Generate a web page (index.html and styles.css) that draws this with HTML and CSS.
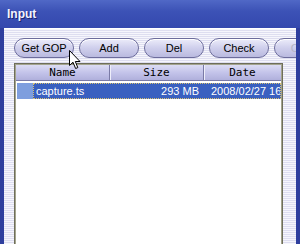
FILE: index.html
```html
<!DOCTYPE html>
<html lang="en">
<head>
  <meta charset="UTF-8" />
  <title>Input</title>
  <link rel="stylesheet" href="styles.css">
</head>
<body>
  <div class="window">
    <div class="titlebar">Input</div>

    <div class="content">
      <div class="toolbar">
        <button class="pill">Get GOP</button>
        <button class="pill">Add</button>
        <button class="pill">Del</button>
        <button class="pill">Check</button>
        <button class="pill disabled">Clear</button>
      </div>

      <div class="list">
        <div class="list-head">
          <div class="col col-name">Name</div>
          <div class="col col-size">Size</div>
          <div class="col col-date">Date</div>
        </div>
        <div class="row selected">
          <div class="row-mark"></div>
          <div class="row-cells">
            <span class="cell cell-name">capture.ts</span>
            <span class="cell cell-size">293 MB</span>
            <span class="cell cell-date">2008/02/27 16:32</span>
          </div>
        </div>
      </div>
    </div>

    <!-- mouse pointer over the first button -->
    <svg class="cursor" width="13" height="20" viewBox="0 0 13 20">
      <path d="M0.5 0.5 L0.5 15.5 L4 12.2 L6.6 18.5 L8.8 17.6 L6.3 11.5 L11 11.5 Z"
            fill="#fff" stroke="#000" stroke-width="1" stroke-linejoin="miter" />
    </svg>
  </div>
</body>
</html>
```

FILE: styles.css
```css
body {
  margin: 0;
  background: #3446aa;
}

.window {
  position: relative;
  width: 300px;
  height: 244px;
  overflow: hidden;
  background: #2f3f9e;
  font-family: "Liberation Sans", Arial, sans-serif;
}

.titlebar {
  height: 28px;
  box-sizing: border-box;
  padding: 7px 0 0 7px;
  background: linear-gradient(#5068c6, #3c52b6 40%, #3448ae);
  color: #f4f4ff;
  font-weight: bold;
  font-size: 12px;
  text-shadow: 1px 1px 0 #1c2470;
}

.content {
  margin: 0 4px;
  height: 216px;
  overflow: hidden;
  border-top: 1px solid #ffffff;
  box-sizing: border-box;
  background: repeating-linear-gradient(to bottom, #f6f6fc 0 1px, #dedef0 1px 2px);
  padding: 9px 0 0 10px;
}

.toolbar {
  display: flex;
  gap: 5px;
  white-space: nowrap;
}

.pill {
  flex: 0 0 60px;
  height: 20px;
  margin: 0;
  padding: 0;
  border: 1px solid #6c6c9c;
  border-radius: 10px;
  background: linear-gradient(#ececfa, #cfcfec 50%, #babadf);
  box-shadow: inset 0 1px 0 #ffffff;
  font-family: "Liberation Sans", Arial, sans-serif;
  font-size: 11px;
  color: #000;
}

.pill.disabled {
  color: #b4b4c4;
}

.list {
  margin-top: 5px;
  width: 269px;
  height: 200px;
  border: 1px solid #6e6e5a;
  box-shadow: inset 0 0 0 1px #a4a48e;
  box-sizing: border-box;
  background: #fff;
  padding: 1px;
  font-size: 11px;
}

.list-head {
  display: flex;
  height: 16px;
  background: linear-gradient(#dcdcf4, #c4c4ea 50%, #b0b0dc);
  border-bottom: 1px solid #7a7aa6;
  box-sizing: border-box;
  font-family: "DejaVu Sans Mono", monospace;
  font-size: 11px;
  line-height: 15px;
  color: #000;
}

.col {
  text-align: center;
  border-right: 1px solid #7a7aa6;
  box-shadow: 1px 0 0 #eeeefa;
}

.col-name {
  width: 93px;
}

.col-size {
  width: 93px;
}

.col-date {
  flex: 1;
  border-right: none;
  box-shadow: none;
}

.row {
  display: flex;
  height: 16px;
  margin: 2px 0 0 1px;
}

.row-mark {
  flex: 0 0 16px;
  background: #7e9ede;
}

.row-cells {
  flex: 1;
  display: flex;
  min-width: 0;
  background: #3a60c0;
  border: 1px dotted #d8c070;
  color: #fff;
  line-height: 14px;
  white-space: nowrap;
  overflow: hidden;
}

.cell {
  flex-shrink: 0;
}

.cell-name {
  width: 75px;
  padding-left: 2px;
}

.cell-size {
  width: 88px;
  text-align: right;
  padding-right: 6px;
}

.cell-date {
  padding-left: 6px;
}

.cursor {
  position: absolute;
  left: 69px;
  top: 50px;
}
```
